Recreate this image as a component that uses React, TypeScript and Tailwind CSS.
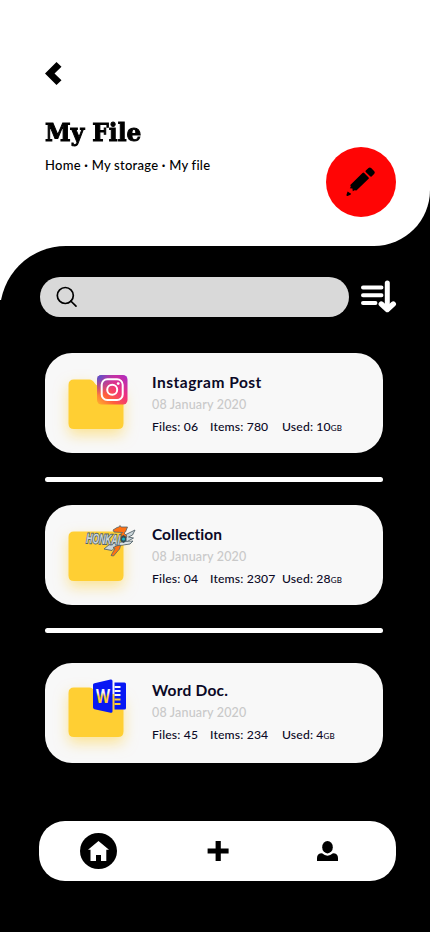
import type { ReactNode } from "react";

function InstagramBadge() {
  return (
    <svg className="absolute left-[28px] top-[-5px]" width="33" height="31" viewBox="0 0 33 31">
      <defs>
        <linearGradient id="igBase" x1="0" y1="1" x2="1" y2="0">
          <stop offset="0" stopColor="#ffb52c" />
          <stop offset=".3" stopColor="#ff603c" />
          <stop offset=".6" stopColor="#f0327c" />
          <stop offset="1" stopColor="#a52cc8" />
        </linearGradient>
        <radialGradient id="igBlue" cx="0" cy="0" r=".7">
          <stop offset="0" stopColor="#3a58dc" />
          <stop offset="1" stopColor="#8a38d0" stopOpacity="0" />
        </radialGradient>
      </defs>
      <rect x="1" y="0" width="30.5" height="29.5" rx="4.5" fill="url(#igBase)" />
      <rect x="1" y="0" width="30.5" height="29.5" rx="4.5" fill="url(#igBlue)" />
      <rect x="5.7" y="4.2" width="21" height="20.8" rx="5.6" fill="none" stroke="#fff" strokeWidth="2" />
      <circle cx="16.2" cy="14.7" r="5" fill="none" stroke="#fff" strokeWidth="2" />
      <circle cx="22.2" cy="8.6" r="1.4" fill="#fff" />
    </svg>
  );
}

function GameBadge() {
  return (
    <svg className="absolute left-[16px] top-[-7px] overflow-visible" width="52" height="34" viewBox="0 0 52 34">
      <g fill="#cbd5d9" stroke="#53636b" strokeWidth=".9">
        <path d="m41 10 10-5-2.500 5-4 2 5 1-8 4.500-4-1Z" />
        <path d="m20 24 6-5 23-3-3 3-14 2-4 4.500Z" />
      </g>
      <path d="m29 5 4-2.500 2-.5 1-1.500 1 1.500h6.500l-2 5-1.500 1 3 3-3 5-3 3-1.500 5-6 7-2.500-.5 4-7-2-1 7-3 2.500-4-3.500-2 1-4 2.500-2-8.500-.5Z" fill="#ff7113" stroke="#53636b" strokeWidth=".8" />
      <path d="m25 20 8-2 14-1.500-3 2-11 2Z" fill="#d9e0e3" />
      <path d="m36.500 12 3-2 3 2v4l-3 2-3-2Z" fill="#334d57" />
      <circle cx="39.500" cy="14" r="1.500" fill="#16b7c5" />
      <text
        x="2"
        y="18"
        textLength="34"
        lengthAdjust="spacingAndGlyphs"
        transform="rotate(3 2 18)"
        fill="#cbd5d9"
        stroke="#53636b"
        strokeWidth="2"
        strokeLinejoin="miter"
        paintOrder="stroke"
        className="font-['Liberation_Sans',sans-serif] text-[14px] font-bold italic"
      >
        HONKAI
      </text>
    </svg>
  );
}

function WordBadge() {
  return (
    <svg className="absolute left-[25px] top-[-9px]" width="34" height="35" viewBox="0 0 34 35">
      <path d="M21.5 3.5h10q1.500 0 1.500 1.500v24q0 1.500-1.500 1.500h-10Z" fill="#0718f4" />
      <path d="M21.5 8h6M21.5 12h6M21.5 16h6" stroke="#f8f8f8" strokeWidth="2" />
      <path d="M21.5 20.5h6M21.5 25h6" stroke="#ffcf33" strokeWidth="2" />
      <path d="M1.500 4.200 17.600.5Q19.500.2 19.500 2v30.500q0 1.500-1.900 1.200L1.500 30.200Q0 29.800 0 28.500V5.800Q0 4.500 1.500 4.200Z" fill="#0718f4" />
      <defs>
        <linearGradient id="wordInk" x1="0" y1="0" x2="0" y2="1">
          <stop offset=".4" stopColor="#f8f8f8" />
          <stop offset=".55" stopColor="#ffcf33" />
        </linearGradient>
      </defs>
      <text x="3" y="23.500" textLength="14" lengthAdjust="spacingAndGlyphs" fill="url(#wordInk)" className="font-['Open_Sans',sans-serif] text-[20px] font-bold">W</text>
    </svg>
  );
}

function Folder({ children, square }: { children: ReactNode; square?: boolean }) {
  return (
    <div className="relative h-[50px] w-[55px] shrink-0">
      <svg className="overflow-visible drop-shadow-[0_6px_7px_rgba(255,207,51,0.5)]" width="55" height="50" viewBox="-0.500 0.500 55 50">
        <path
          d={square
            ? "M5.500 0H49.500Q55 0 55 5.500V44Q55 49.500 49.500 49.500H5.500Q0 49.500 0 44V5.500Q0 0 5.500 0Z"
            : "M5.500 0H21Q24 0 26 3.500T31 6.500H49.500Q55 6.500 55 12V44Q55 49.500 49.500 49.500H5.500Q0 49.500 0 44V5.500Q0 0 5.500 0Z"}
          fill="#ffcf33"
        />
      </svg>
      {children}
    </div>
  );
}

type CardProps = {
  title: string;
  titleClass: string;
  files: string;
  items: string;
  used: string;
  padding: string;
  square?: boolean;
  badge: ReactNode;
};

function FileCard({ title, titleClass, files, items, used, padding, square, badge }: CardProps) {
  return (
    <article className={`flex h-[100px] w-[338px] items-start rounded-[27px] bg-[#f8f8f8] pl-[23px] ${padding}`}>
      <div className="mt-[8px]"><Folder square={square}>{badge}</Folder></div>
      <div className="ml-[29px] text-[#0b0926]">
        <h2 className={`text-[15.500px] leading-[20px] font-bold ${titleClass}`}>{title}</h2>
        <p className="mt-[4px] text-[12.500px] leading-[18px] font-medium tracking-[0.180px] text-[#c9c9c9]">08 January 2020</p>
        <div className="mt-[4px] flex text-[12.200px] leading-[18px] font-medium tracking-[0.150px] whitespace-nowrap">
          <span className="w-[58px]">Files: {files}</span>
          <span className="w-[72px]">Items: {items}</span>
          <span>Used: {used}<span className="text-[8px]">GB</span></span>
        </div>
      </div>
    </article>
  );
}

export default function App() {
  return (
    <div className="flex h-[932px] w-[430px] flex-col overflow-hidden bg-black font-['Lato',sans-serif] text-black">
      <header className="flex h-[246px] shrink-0 justify-between rounded-br-[56px] bg-white pr-[34px] pl-[45px]">
        <div>
          <svg className="mt-[62px]" width="17" height="23" viewBox="0 0 17 23">
            <path d="M0 11.500 11.500 0l5 4.800-7 6.700 7 6.700-5 4.800Z" />
          </svg>
          <h1 className="mt-[29px] w-max origin-left scale-x-[.93] font-['DejaVu_Serif',serif] text-[25px] leading-[38px] font-bold whitespace-nowrap [-webkit-text-stroke:1px_black]">My File</h1>
          <p className="mt-[3px] text-[13px] leading-[20px] font-medium tracking-[0.250px] whitespace-nowrap">
            Home <b>·</b> My storage <b>·</b> My file
          </p>
        </div>
        <button className="mt-[147px] flex size-[70px] items-center justify-center rounded-full bg-[#ff0505]">
          <svg className="-ml-px" width="30" height="30" viewBox="0 0 30 30">
            <path d="m4.300 18 12.200-12.100q.9-.8 1.700 0l4.400 4.500q.7.700 0 1.400L10.400 23.600l-1.900-.3-1.700 1-.4-2.800-2.600-.2 1-1.600Z" />
            <path d="m19.800 3.500 2.700-2.600q1.300-.9 2.600 0l3.200 3.300q1 1.300 0 2.500l-2.700 2.700q-.8.600-1.500-.1l-4.400-4.400q-.6-.7.100-1.400ZM1.600 24.500l3.500 2.200-.6 1.100-3 1.200q-1.200.300-1-1.200Z" />
          </svg>
        </button>
      </header>

      <main className="relative h-[575px] shrink-0">
        <div className="absolute top-0 left-0 h-[54px] w-[66px] overflow-hidden bg-white">
          <div className="h-[132px] w-[132px] rounded-full bg-black" />
        </div>
        <div className="relative flex flex-col pt-[31px]">
          <div className="ml-[40px] flex items-start gap-[12px]">
            <div className="flex h-[40px] w-[309px] items-center rounded-full bg-[#d9d9d9] pl-[16px]">
              <svg width="22" height="22" viewBox="0 0 22 22" fill="none" stroke="black" strokeWidth="1.700">
                <circle cx="9.300" cy="9.500" r="8" />
                <path d="m14.800 15 5.200 5.200" strokeLinecap="round" />
              </svg>
            </div>
            <svg className="mt-[3px]" width="36" height="33" viewBox="0 0 36 33" fill="none" stroke="white" strokeLinecap="round">
              <path d="M2 7.500h18.500M2 15.300h18.500M2 23h12.500" strokeWidth="4" />
              <path d="M26.300 3v26m-6-6 6 6.500 6-6.500" stroke="black" strokeWidth="7" />
              <path d="M26.300 3v26" strokeWidth="5" />
              <path d="m20.300 24 6 5.500 6-5.500" strokeWidth="5.400" strokeLinejoin="round" />
            </svg>
          </div>
          <section className="mt-[36px] ml-[45px] w-[338px]">
            <FileCard title="Instagram Post" titleClass="tracking-[0.500px]" files="06" items="780" used="10" padding="pt-[19px]" badge={<InstagramBadge />} />
            <div className="mt-[24px] h-[5px] rounded-full bg-white" />
            <div className="mt-[23px]">
              <FileCard title="Collection" titleClass="tracking-[0.020px] [font-variant-ligatures:none]" files="04" items="2307" used="28" padding="pt-[19px]" square badge={<GameBadge />} />
            </div>
            <div className="mt-[23px] h-[5px] rounded-full bg-white" />
            <div className="mt-[30px]">
              <FileCard title="Word Doc." titleClass="tracking-[0.220px]" files="45" items="234" used="4" padding="pt-[17px]" badge={<WordBadge />} />
            </div>
          </section>
        </div>
      </main>

      <nav className="ml-[39px] flex h-[60px] w-[357px] shrink-0 items-center rounded-[26px] bg-white">
        <button className="ml-[41px] flex h-[36px] w-[37px] items-center justify-center rounded-[50%] bg-black">
          <svg width="21" height="20" viewBox="0 0 21 20" fill="white"><path d="M10.500 0 21 8.700H18.300V20H13v-6H8v6H2.500V8.700H0Z" /></svg>
        </button>
        <svg className="ml-[90px]" width="22" height="20" viewBox="-0.600 0 22 20"><path d="M8 0h5.200v7.500H21v5h-7.800V20H8v-7.500H0v-5h8Z" /></svg>
        <svg className="ml-[88px]" width="21" height="20" viewBox="0 0 21 20">
          <ellipse cx="10.500" cy="6.200" rx="5.300" ry="6.200" />
          <path d="M0 20v-3q0-4.500 5-4.700 5.500 4.800 11 0 5 .2 5 4.700v3Z" />
        </svg>
      </nav>
    </div>
  );
}
